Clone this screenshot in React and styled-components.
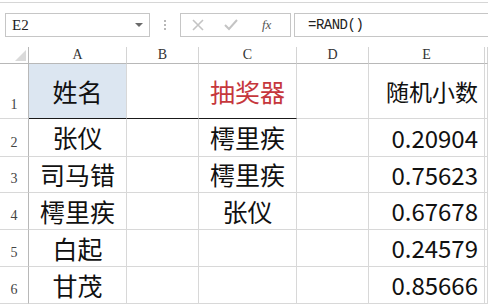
import { Fragment } from 'react';
import styled, { createGlobalStyle } from 'styled-components';

const Global = createGlobalStyle`
  html, body {
    margin: 0;
    background: #fff;
  }
  body {
    font-family: "Noto Sans CJK SC", "Noto Sans", sans-serif;
  }
`;

const Page = styled.div`
  width: 488px;
  height: 304px;
  overflow: hidden;
  background: #fff;
`;

const FormulaBar = styled.div`
  margin-top: 2px;
  border-top: 1px solid #d6d6d6;
  height: 45px;
  display: flex;
  align-items: flex-start;
  padding: 10px 0 0 5px;
  box-sizing: border-box;
`;

const NameBox = styled.div`
  width: 145px;
  height: 24px;
  box-sizing: border-box;
  border: 1px solid #c6c6c6;
  display: flex;
  align-items: center;
  justify-content: space-between;
  padding: 0 6px 0 6px;
  font-family: "Liberation Serif", serif;
  font-size: 15px;
  color: #222;
`;

const Caret = styled.span`
  width: 0;
  height: 0;
  border-left: 4px solid transparent;
  border-right: 4px solid transparent;
  border-top: 4px solid #6a6a6a;
`;

const Dots = styled.div`
  width: 30px;
  height: 24px;
  display: flex;
  flex-direction: column;
  align-items: center;
  justify-content: center;
  gap: 2px;
  & span {
    width: 2px;
    height: 2px;
    background: #b8b8b8;
  }
`;

const Buttons = styled.div`
  width: 111px;
  height: 24px;
  box-sizing: border-box;
  border: 1px solid #c6c6c6;
  display: flex;
  align-items: center;
  padding-left: 11px;
  gap: 20px;
`;

const Fx = styled.span`
  font-family: "Liberation Serif", serif;
  font-style: italic;
  font-size: 13px;
  color: #555;
  margin-left: 4px;
`;

const Input = styled.div`
  margin-left: 3px;
  flex: 1;
  height: 24px;
  box-sizing: border-box;
  border: 1px solid #c6c6c6;
  border-right: none;
  display: flex;
  align-items: center;
  padding-left: 13px;
  font-family: "Liberation Mono", monospace;
  font-size: 14px;
  letter-spacing: -0.5px;
  color: #222;
`;

const Grid = styled.div`
  display: grid;
  grid-template-columns: 29px 98px 72px 98px 72px 116px 1fr;
  grid-template-rows: 17px 55px 38px 36px 37px 37px 37px;
`;

const HeadCell = styled.div`
  box-sizing: border-box;
  border-right: 1px solid #d4d4d4;
  border-bottom: 1px solid #b8b8b8;
  display: flex;
  align-items: center;
  justify-content: center;
  font-family: "Liberation Serif", serif;
  font-size: 14px;
  color: #333;
  position: relative;
`;

const Corner = styled(HeadCell)`
  border-right-color: #b8b8b8;
  &::after {
    content: '';
    position: absolute;
    right: 2px;
    bottom: 2px;
    border-left: 11px solid transparent;
    border-bottom: 11px solid #dadada;
  }
`;

const RowNum = styled.div`
  box-sizing: border-box;
  border-right: 1px solid #b8b8b8;
  border-bottom: 1px solid #d8d8d8;
  display: flex;
  align-items: flex-end;
  justify-content: center;
  padding-bottom: 5px;
  font-family: "Liberation Serif", serif;
  font-size: 14px;
  color: #444;
`;

const Cell = styled.div`
  box-sizing: border-box;
  border-right: 1px solid #d8d8d8;
  border-bottom: 1px solid ${(p) => (p.$thick ? '#1a1a1a' : '#d8d8d8')};
  background: ${(p) => p.$fill || '#fff'};
  display: flex;
  align-items: center;
  justify-content: ${(p) => (p.$right ? 'flex-end' : 'center')};
  padding-right: ${(p) => (p.$right ? '6px' : '0')};
  font-size: ${(p) => p.$size || 25}px;
  color: ${(p) => p.$color || '#111'};
  white-space: nowrap;
  line-height: 1;
`;

const cols = ['A', 'B', 'C', 'D', 'E', ''];

const rows = [
  ['张仪', '', '樗里疾', '', '0.20904'],
  ['司马错', '', '樗里疾', '', '0.75623'],
  ['樗里疾', '', '张仪', '', '0.67678'],
  ['白起', '', '', '', '0.24579'],
  ['甘茂', '', '', '', '0.85666'],
];

const Cross = () => (
  <svg width="12" height="12" viewBox="0 0 12 12">
    <path d="M1 1 L11 11 M11 1 L1 11" stroke="#c4c4c4" strokeWidth="1.6" fill="none" />
  </svg>
);

const Check = () => (
  <svg width="14" height="12" viewBox="0 0 14 12">
    <path d="M1 6 L5 10 L13 1" stroke="#c4c4c4" strokeWidth="2" fill="none" />
  </svg>
);

export default function App() {
  return (
    <Page>
      <Global />
      <FormulaBar>
        <NameBox>
          E2
          <Caret />
        </NameBox>
        <Dots>
          <span />
          <span />
          <span />
        </Dots>
        <Buttons>
          <Cross />
          <Check />
          <Fx>fx</Fx>
        </Buttons>
        <Input>=RAND()</Input>
      </FormulaBar>
      <Grid>
        <Corner />
        {cols.map((c, i) => (
          <HeadCell key={i}>{c}</HeadCell>
        ))}

        <RowNum>1</RowNum>
        <Cell $fill="#dce6f1" $thick>姓名</Cell>
        <Cell $thick />
        <Cell $thick $color="#c6373c">抽奖器</Cell>
        <Cell />
        <Cell $right $size={23}>随机小数</Cell>
        <Cell />

        {rows.map((r, i) => (
          <Fragment key={i}>
            <RowNum>{i + 2}</RowNum>
            {r.map((v, j) => (
              <Cell key={j} $right={j === 4} $size={j === 4 ? 24 : 25}>
                {v}
              </Cell>
            ))}
            <Cell />
          </Fragment>
        ))}
      </Grid>
    </Page>
  );
}
